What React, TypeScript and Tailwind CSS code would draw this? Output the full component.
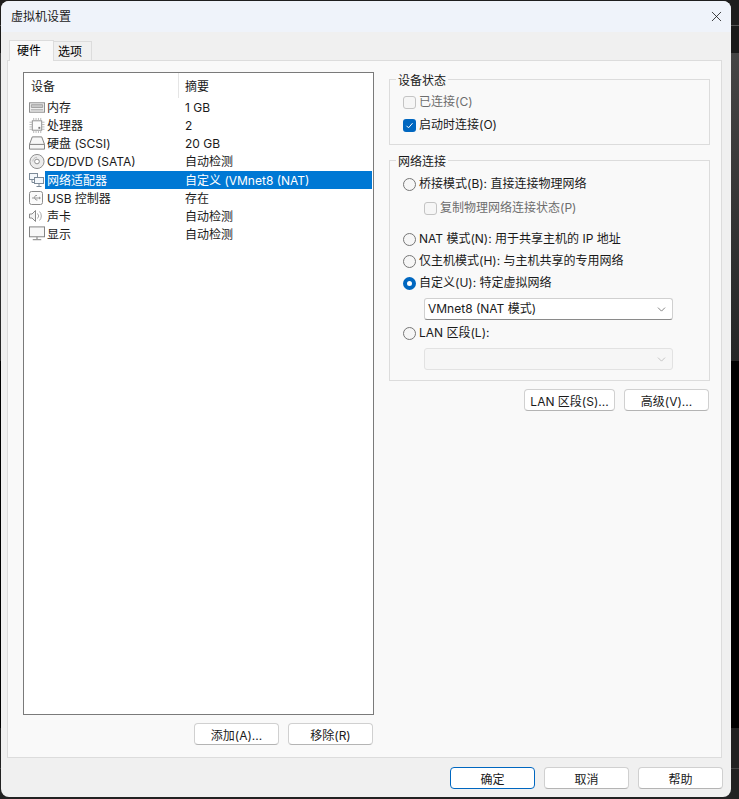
import type { ReactNode } from "react";
import { ChevronDown, X } from "lucide-react";

const FONT = "font-['Inter','Noto_Sans_CJK_SC',sans-serif]";

function MemoryIcon() {
    return (
        <svg width="17" height="11" viewBox="0 0 17 11" fill="none">
            <rect x="0.5" y="0.5" width="16" height="10" fill="#eeeeee" stroke="#8a8a8a" />
            <path d="M2.5 2.5h12v3h-12z" fill="#c8c8c8" stroke="#a0a0a0" />
            <path d="M2 8h13" stroke="#9a9a9a" />
        </svg>
    );
}

function CpuIcon() {
    return (
        <svg width="17" height="17" viewBox="0 0 17 17" fill="none">
            <rect x="3.5" y="3.5" width="10" height="10" fill="#fbfbfb" stroke="#8a8a8a" />
            <path d="M0.5 5h3M0.5 7.5h3M0.5 10h3M0.5 12.5h3M13.5 5h3M13.5 7.5h3M13.5 10h3M13.5 12.5h3M5 0.5v3M7.5 0.5v3M10 0.5v3M12.5 0.5v3M5 13.5v3M7.5 13.5v3M10 13.5v3M12.5 13.5v3" stroke="#b4b4b4" />
            <rect x="10" y="10" width="2" height="2" fill="#777" />
        </svg>
    );
}

function DiskIcon() {
    return (
        <svg width="17" height="14" viewBox="0 0 17 14" fill="none">
            <path d="M3.5 0.5h10l3 8v5H0.5v-5z" fill="#f7f7f7" stroke="#7c7c7c" />
            <path d="M0.5 8.5h16" stroke="#7c7c7c" />
        </svg>
    );
}

function CdIcon() {
    return (
        <svg width="17" height="17" viewBox="0 0 17 17" fill="none">
            <circle cx="8.5" cy="8.5" r="7.5" fill="#ececec" stroke="#8a8a8a" />
            <circle cx="8.5" cy="8.5" r="2.5" fill="#fff" stroke="#8a8a8a" />
            <path d="M4 8.5A4.5 4.5 0 0 1 8.5 4" stroke="#bbbbbb" />
        </svg>
    );
}

function NetworkIcon() {
    return (
        <svg width="15" height="14" viewBox="0 0 15 14" fill="none">
            <rect x="0.5" y="0.5" width="8" height="6" fill="#f4f8fc" stroke="#7d8b99" />
            <rect x="5.5" y="4.5" width="9" height="6" fill="#f4f8fc" stroke="#7d8b99" />
            <path d="M10 10.5v3M7.5 13.5h5M3 6.5v3h2.5" stroke="#7d8b99" />
        </svg>
    );
}

function UsbIcon() {
    return (
        <svg width="14" height="14" viewBox="0 0 14 14" fill="none">
            <rect x="0.5" y="0.5" width="13" height="13" rx="2" fill="#fbfbfb" stroke="#8c8c8c" />
            <path d="M3 7h7M5 7l1.5-2.5H8M5.5 7 7 9h1.5" stroke="#9a9a9a" />
            <path d="M10 5.5 12 7l-2 1.5z" fill="#9a9a9a" />
        </svg>
    );
}

function SoundIcon() {
    return (
        <svg width="13" height="12" viewBox="0 0 13 12" fill="none">
            <path d="M0.5 4h2.5l3.5-3.5v11L3 8H0.5z" fill="#f4f4f4" stroke="#8a8a8a" />
            <path d="M8.5 3.5a3.5 3.5 0 0 1 0 5M10.5 1.5a6.5 6.5 0 0 1 0 9" stroke="#a8a8a8" />
        </svg>
    );
}

function DisplayIcon() {
    return (
        <svg width="17" height="15" viewBox="0 0 17 15" fill="none">
            <rect x="0.5" y="0.5" width="16" height="10.5" fill="#f8f8f8" stroke="#7e7e7e" />
            <path d="M4 14h9M8.5 11v3" stroke="#9a9a9a" strokeWidth="1.5" />
        </svg>
    );
}

const devices: { name: string; summary: string; icon: ReactNode; selected?: boolean }[] = [
    { name: "内存", summary: "1 GB", icon: <MemoryIcon /> },
    { name: "处理器", summary: "2", icon: <CpuIcon /> },
    { name: "硬盘 (SCSI)", summary: "20 GB", icon: <DiskIcon /> },
    { name: "CD/DVD (SATA)", summary: "自动检测", icon: <CdIcon /> },
    { name: "网络适配器", summary: "自定义 (VMnet8 (NAT)", icon: <NetworkIcon />, selected: true },
    { name: "USB 控制器", summary: "存在", icon: <UsbIcon /> },
    { name: "声卡", summary: "自动检测", icon: <SoundIcon /> },
    { name: "显示", summary: "自动检测", icon: <DisplayIcon /> },
];

function Button({ label, width, primary = false }: { label: string; width: string; primary?: boolean }) {
    return (
        <button
            className={`${width} h-[22px] pt-[4px] rounded-[4px] bg-white border text-[12px] leading-none text-[#1a1a1a] ${
                primary ? "border-[#0067c0]" : "border-[#d0d0d0] border-b-[#b4b4b4]"
            }`}
        >
            {label}
        </button>
    );
}

function Check({ label, checked = false, disabled = false }: { label: string; checked?: boolean; disabled?: boolean }) {
    return (
        <div className={`flex items-center gap-[3px] ${disabled ? "text-[#6d6d6d]" : "text-[#1a1a1a]"}`}>
            {checked ? (
                <span className="w-[13px] h-[13px] rounded-[3px] bg-[#0067c0] flex items-center justify-center">
                    <svg width="9" height="9" viewBox="0 0 9 9" fill="none">
                        <path d="M1.5 4.8 3.5 6.8 7.5 2.2" stroke="#fff" strokeWidth="1" />
                    </svg>
                </span>
            ) : (
                <span className="w-[13px] h-[13px] rounded-[3px] border border-[#c4c4c4] bg-[#f6f6f6]" />
            )}
            <span>{label}</span>
        </div>
    );
}

function Radio({ label, checked = false }: { label: string; checked?: boolean }) {
    return (
        <div className="flex items-center gap-[3px] text-[#1a1a1a]">
            {checked ? (
                <span className="w-[13px] h-[13px] rounded-full border-[4px] border-[#0067c0] bg-white" />
            ) : (
                <span className="w-[13px] h-[13px] rounded-full border border-[#767676] bg-[#f6f6f6]" />
            )}
            <span>{label}</span>
        </div>
    );
}

function Group({ title, className, children }: { title: string; className: string; children: ReactNode }) {
    return (
        <fieldset className={`border border-[#dcdcdc] ${className}`}>
            <legend className="ml-[-7px] px-[2px] pt-[3px] text-[12px] leading-[12px] text-[#1a1a1a]">{title}</legend>
            {children}
        </fieldset>
    );
}

export default function App() {
    return (
        <div className={`${FONT} w-[739px] h-[799px] bg-[linear-gradient(#1e1e1e_25px,#555555_25px,#555555_26px,#1a1a1a_26px,#1a1a1a_53px,#454545_53px,#262626_361px,#000000_361px,#000000_728px,#222222_728px,#222222_768px,#444444_768px,#444444_769px,#222222_769px)] pl-[1px] pr-[8px] pt-[1px] pb-[2px] text-[12px] overflow-hidden`}>
            <div className="w-[730px] h-[796px] rounded-[8px] overflow-hidden bg-[#f0f0f0] flex flex-col">
                <div className="h-[31px] shrink-0 bg-[#eff3fa] flex items-center justify-between pl-[10px] pr-[6px]">
                    <span className="text-[12px] text-[#1a1a1a]">虚拟机设置</span>
                    <X size={17} strokeWidth={1.1} className="text-[#111]" />
                </div>

                <div className="flex items-end pl-[8px] pt-[8px] h-[28px] shrink-0">
                    <div className="w-[45px] h-[21px] pl-[7px] bg-[#f9f9f9] border border-b-0 border-[#dcdcdc] flex items-center -mb-px relative">
                        硬件
                    </div>
                    <div className="w-[38px] h-[19px] pl-[4px] pt-[1px] bg-[#f0f0f0] border border-l-0 border-b-0 border-[#dcdcdc] flex items-center">
                        选项
                    </div>
                </div>

                <div className="ml-[6px] w-[715px] h-[698px] shrink-0 bg-[#f9f9f9] border border-[#dcdcdc] flex pl-[15px] pt-[11px] text-[#1a1a1a]">
                    <div className="w-[351px] shrink-0 flex flex-col">
                        <div className="h-[643px] bg-white border border-[#7a7a7a] flex flex-col">
                            <div className="h-[25px] shrink-0 flex items-center">
                                <span className="w-[155px] h-full pl-[7px] pt-[3px] flex items-center border-r border-[#e5e5e5]">设备</span>
                                <span className="pl-[6px] pt-[3px]">摘要</span>
                            </div>
                            {devices.map(device => (
                                <div key={device.name} className="h-[18.14px] flex items-center pr-[1px]">
                                    <div className="w-[21px] pl-[5px] shrink-0 flex items-center">{device.icon}</div>
                                    <span className={`w-[135px] pl-[2px] pt-[2px] shrink-0 h-full flex items-center ${device.selected ? "bg-[#0078d4] text-white" : ""}`}>
                                        {device.name}
                                    </span>
                                    <span className={`flex-1 h-full pt-[2px] flex items-center pl-[5px] ${device.selected ? "bg-[#0078d4] text-white" : ""}`}>
                                        {device.summary}
                                    </span>
                                </div>
                            ))}
                        </div>
                        <div className="flex justify-end gap-[9px] pt-[8px] pr-[1px]">
                            <Button label="添加(A)..." width="w-[85px]" />
                            <Button label="移除(R)" width="w-[85px]" />
                        </div>
                    </div>

                    <div className="w-[321px] ml-[15px] shrink-0 flex flex-col">
                        <Group title="设备状态" className="h-[73px] pl-[13px] pt-[6px] flex flex-col gap-[5px]">
                            <Check label="已连接(C)" disabled />
                            <Check label="启动时连接(O)" checked />
                        </Group>
                        <Group title="网络连接" className="h-[228px] mt-[8px] pl-[13px] pt-[7px] flex flex-col">
                            <Radio label="桥接模式(B): 直接连接物理网络" />
                            <div className="pl-[21px] mt-[6px]">
                                <Check label="复制物理网络连接状态(P)" disabled />
                            </div>
                            <div className="mt-[13px] flex flex-col gap-[4px]">
                                <Radio label="NAT 模式(N): 用于共享主机的 IP 地址" />
                                <Radio label="仅主机模式(H): 与主机共享的专用网络" />
                                <Radio label="自定义(U): 特定虚拟网络" checked />
                            </div>
                            <div className="ml-[21px] mt-[6px] w-[249px] h-[22px] shrink-0 bg-white border border-[#d0d0d0] border-b-[#8a8a8a] rounded-[3px] flex items-center justify-between pl-[3px] pr-[4px]">
                                <span>VMnet8 (NAT 模式)</span>
                                <ChevronDown size={13} strokeWidth={1.2} className="text-[#444]" />
                            </div>
                            <div className="mt-[4px]">
                                <Radio label="LAN 区段(L):" />
                            </div>
                            <div className="ml-[21px] mt-[6px] w-[249px] h-[22px] shrink-0 bg-[#f6f6f6] border border-[#e2e2e2] rounded-[3px] flex items-center justify-end pr-[4px]">
                                <ChevronDown size={13} strokeWidth={1.2} className="text-[#a8a8a8]" />
                            </div>
                        </Group>
                        <div className="flex justify-end gap-[9px] mt-[8px] pr-[1px]">
                            <Button label="LAN 区段(S)..." width="w-[91px]" />
                            <Button label="高级(V)..." width="w-[85px]" />
                        </div>
                    </div>
                </div>

                <div className="flex justify-end gap-[9px] pt-[9px] pr-[8px]">
                    <Button label="确定" width="w-[85px]" primary />
                    <Button label="取消" width="w-[85px]" />
                    <Button label="帮助" width="w-[85px]" />
                </div>
            </div>
        </div>
    );
}
